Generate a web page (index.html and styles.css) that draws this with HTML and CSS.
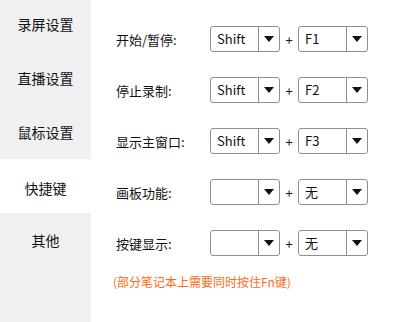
FILE: index.html
```html
<!DOCTYPE html>
<html lang="zh-CN">
<head>
  <meta charset="UTF-8">
  <title>快捷键设置</title>
  <link rel="stylesheet" href="styles.css">
</head>
<body>
  <div class="window">
    <div class="sidebar">
      <div class="nav-item">录屏设置</div>
      <div class="nav-item">直播设置</div>
      <div class="nav-item">鼠标设置</div>
      <div class="nav-item active">快捷键</div>
      <div class="nav-item">其他</div>
    </div>

    <div class="content">
      <div class="row">
        <span class="label">开始/暂停:</span>
        <div class="combo"><span class="value">Shift</span><span class="arrow"></span></div>
        <span class="plus">+</span>
        <div class="combo"><span class="value">F1</span><span class="arrow"></span></div>
      </div>
      <div class="row">
        <span class="label">停止录制:</span>
        <div class="combo"><span class="value">Shift</span><span class="arrow"></span></div>
        <span class="plus">+</span>
        <div class="combo"><span class="value">F2</span><span class="arrow"></span></div>
      </div>
      <div class="row">
        <span class="label">显示主窗口:</span>
        <div class="combo"><span class="value">Shift</span><span class="arrow"></span></div>
        <span class="plus">+</span>
        <div class="combo"><span class="value">F3</span><span class="arrow"></span></div>
      </div>
      <div class="row">
        <span class="label">画板功能:</span>
        <div class="combo"><span class="value"></span><span class="arrow"></span></div>
        <span class="plus">+</span>
        <div class="combo"><span class="value">无</span><span class="arrow"></span></div>
      </div>
      <div class="row">
        <span class="label">按键显示:</span>
        <div class="combo"><span class="value"></span><span class="arrow"></span></div>
        <span class="plus">+</span>
        <div class="combo"><span class="value">无</span><span class="arrow"></span></div>
      </div>
      <p class="note">(部分笔记本上需要同时按住Fn键)</p>
    </div>
  </div>
</body>
</html>
```

FILE: styles.css
```css
body {
  margin: 0;
  font-family: "Noto Sans CJK SC", "Noto Sans", sans-serif;
  color: #111;
  background: #fff;
}

.window {
  display: flex;
  height: 322px;
  overflow: hidden;
}

.sidebar {
  width: 91px;
  flex-shrink: 0;
  background: #f0f0f0;
}

.nav-item {
  height: 54px;
  display: flex;
  align-items: center;
  justify-content: center;
  font-size: 14px;
  color: #111;
}

.nav-item:first-child {
  margin-top: -3px;
}

.nav-item.active {
  background: #fff;
  padding-top: 3px;
  height: 51px;
}

.content {
  flex: 1;
  padding: 26px 0 0 25px;
}

.row {
  display: flex;
  align-items: center;
  height: 26px;
  margin-bottom: 25px;
}

.label {
  width: 94px;
  font-size: 13px;
}

.combo {
  width: 70px;
  height: 26px;
  box-sizing: border-box;
  border: 1px solid #8f8f8f;
  border-radius: 3px;
  display: flex;
  background: #fff;
}

.value {
  flex: 1;
  font-size: 13px;
  line-height: 24px;
  padding-left: 6px;
}

.arrow {
  width: 20px;
  border-left: 1px solid #8f8f8f;
  display: flex;
  align-items: center;
  justify-content: center;
}

.arrow::after {
  content: "";
  border-left: 5px solid transparent;
  border-right: 5px solid transparent;
  border-top: 6px solid #111;
}

.plus {
  width: 18px;
  text-align: center;
  font-size: 13px;
}

.note {
  margin: -8px 0 0 -3px;
  font-size: 12px;
  color: #ff6a14;
}
```
